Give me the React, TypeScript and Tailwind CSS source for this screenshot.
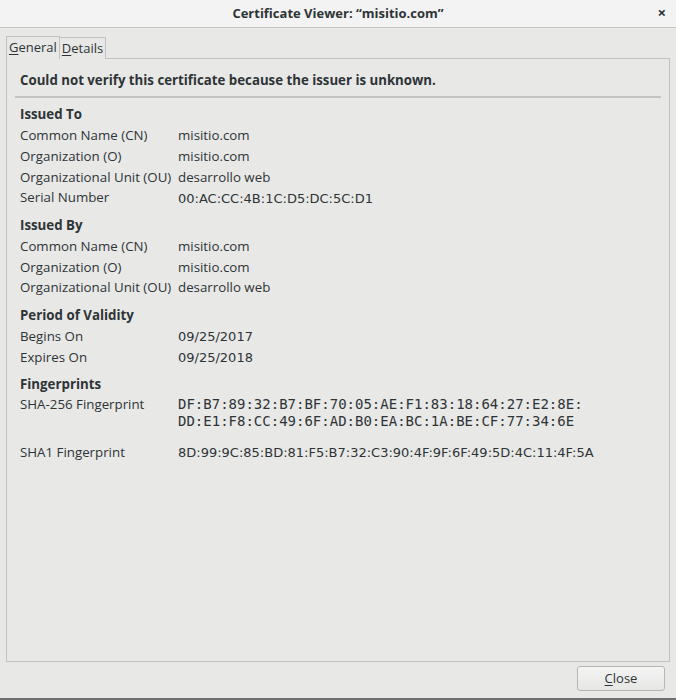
import React from "react";

const sans = { fontFamily: '"Open Sans", "DejaVu Sans", sans-serif' };
const num = { fontFamily: '"DejaVu Sans", sans-serif' };
const mono = { fontFamily: '"DejaVu Sans Mono", monospace' };

function Row({ label, value, numeric }: { label: string; value: string; numeric?: boolean }) {
  return (
    <div className="flex h-[20.75px] items-center">
      <div className="w-[158px] shrink-0">{label}</div>
      <div className={numeric ? "text-[13px]" : ""} style={numeric ? num : undefined}>
        {value}
      </div>
    </div>
  );
}

function Section({ title, rows }: { title: string; rows: [string, string, boolean?][] }) {
  return (
    <div className="mb-[7px]">
      <div className="flex h-[20.75px] items-center font-bold">{title}</div>
      {rows.map(([l, v, n]) => (
        <Row key={l} label={l} value={v} numeric={n} />
      ))}
    </div>
  );
}

export default function App() {
  return (
    <div
      className="flex h-[700px] w-[676px] flex-col bg-[#e8e8e7] text-[13.3px] text-[#2e3436]"
      style={sans}
    >
      <div className="relative flex h-[28px] shrink-0 items-center justify-center border-b border-[#c6c6c4] bg-[#f3f3f3]">
        <span className="text-[13px] font-bold text-[#2e3436]">Certificate Viewer: “misitio.com”</span>
        <span className="absolute right-[10px] top-[5px] text-[15px] font-bold leading-none text-[#2e3436]">
          ×
        </span>
      </div>

      <div className="flex flex-1 flex-col px-[6px] pt-[8px]">
        <div className="flex h-[23px] items-end text-[13px]">
          <div className="flex h-[23px] items-center border border-b-0 border-[#c2c2c0] bg-[#e8e8e7] px-[2px]">
            <span className="underline decoration-1 underline-offset-2">G</span>eneral
          </div>
          <div className="flex h-[22px] items-center border border-b-0 border-l-0 border-[#c2c2c0] bg-[#e8e8e7] px-[2px]">
            <span className="underline decoration-1 underline-offset-2">D</span>etails
          </div>
          <div className="flex-1 border-b border-[#c2c2c0]" />
        </div>
        <div className="h-[603px] border border-t-0 border-[#c2c2c0] px-[13px]">
          <div className="flex h-[37px] items-center pt-[7px] text-[13.25px] font-bold">
            Could not verify this certificate because the issuer is unknown.
          </div>
          <div className="mb-[7px] mr-[-5px] ml-[-5px] border-t-2 border-[#c4c4c2]" />
          <Section
            title="Issued To"
            rows={[
              ["Common Name (CN)", "misitio.com"],
              ["Organization (O)", "misitio.com"],
              ["Organizational Unit (OU)", "desarrollo web"],
              ["Serial Number", "00:AC:CC:4B:1C:D5:DC:5C:D1", true],
            ]}
          />
          <Section
            title="Issued By"
            rows={[
              ["Common Name (CN)", "misitio.com"],
              ["Organization (O)", "misitio.com"],
              ["Organizational Unit (OU)", "desarrollo web"],
            ]}
          />
          <Section
            title="Period of Validity"
            rows={[
              ["Begins On", "09/25/2017", true],
              ["Expires On", "09/25/2018", true],
            ]}
          />
          <div className="flex h-[20.75px] items-center font-bold">Fingerprints</div>
          <div className="flex">
            <div className="w-[158px] shrink-0 leading-[17px]">SHA-256 Fingerprint</div>
            <div className="text-[14px] leading-[17px]" style={mono}>
              DF:B7:89:32:B7:BF:70:05:AE:F1:83:18:64:27:E2:8E:
              <br />
              DD:E1:F8:CC:49:6F:AD:B0:EA:BC:1A:BE:CF:77:34:6E
            </div>
          </div>
          <div className="mt-[14px] flex">
            <div className="w-[158px] shrink-0 leading-[17px]">SHA1 Fingerprint</div>
            <div className="text-[13px] leading-[17px]" style={num}>
              8D:99:9C:85:BD:81:F5:B7:32:C3:90:4F:9F:6F:49:5D:4C:11:4F:5A
            </div>
          </div>
        </div>
        <div className="flex justify-end pt-[4px] pr-[5px]">
          <button
            type="button"
            className="h-[25px] w-[88px] rounded-[3px] border border-[#b6b6b3] bg-gradient-to-b from-[#f4f4f4] to-[#e6e6e5] text-[13px] text-[#2e3436]"
            style={sans}
          >
            <span className="underline decoration-1 underline-offset-2">C</span>lose
          </button>
        </div>
      </div>
      <div className="h-[2px] shrink-0 bg-[#6d6d6d]" />
    </div>
  );
}
